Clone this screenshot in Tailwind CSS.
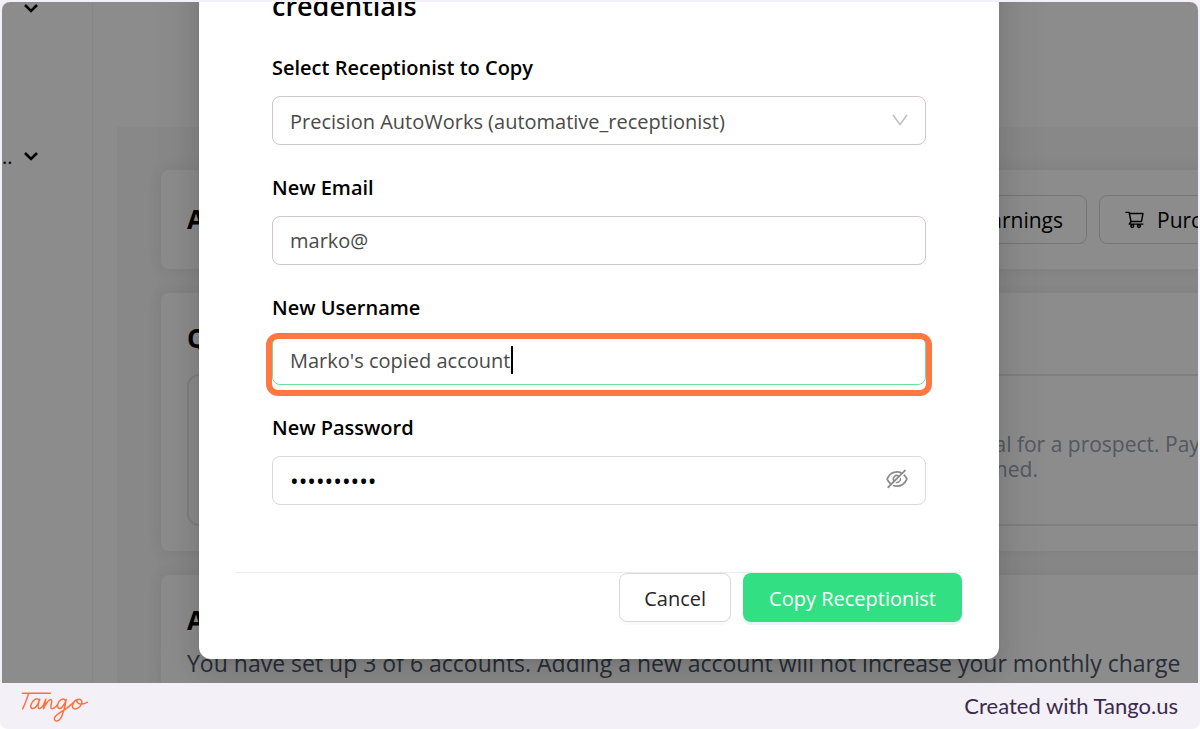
<!DOCTYPE html>
<html lang="en">
<head>
    <meta charset="UTF-8">
    <meta name="viewport" content="width=device-width, initial-scale=1.0">
    <title>Copy Receptionist</title>
    <script src="https://cdn.jsdelivr.net/npm/@tailwindcss/browser@4"></script>
</head>
<body class="bg-white font-['Open_Sans',sans-serif]">

    <div class="flex h-screen flex-col overflow-hidden rounded-b-lg bg-[#f3f1f7] px-[2px] pt-[2px]">

        <!-- Captured screen -->
        <div class="relative flex flex-1 overflow-hidden rounded-t-lg bg-white">

            <!-- Sidebar -->
            <aside class="flex w-[91px] shrink-0 flex-col border-r border-gray-100 text-black">
                <div class="flex h-[14px] items-center pl-[22px]">
                    <svg class="h-[10px] w-[14px]" viewBox="0 0 14 10" fill="none" stroke="currentColor" stroke-width="2.6"><path d="M1 1l6 6 6-6"/></svg>
                </div>
                <div class="mt-[128px] flex h-[26px] items-center">
                    <span class="w-[22px] text-[20px] leading-[26px]">..</span>
                    <svg class="h-[10px] w-[14px]" viewBox="0 0 14 10" fill="none" stroke="currentColor" stroke-width="2.6"><path d="M1 1l6 6 6-6"/></svg>
                </div>
            </aside>

            <!-- Dashboard -->
            <main class="min-w-0 flex-1 pt-[125px] pl-[24px]">
                <div class="flex w-[1400px] flex-col gap-6 bg-[#f7f7f7] py-[43px] pl-[44px]">

                    <section class="flex h-[99px] items-center rounded-lg bg-white pl-[26px] shadow-[0_0_16px_rgba(0,0,0,0.08)]">
                        <h2 class="w-[735px] text-[26px] font-bold text-black">Accounts</h2>
                        <button type="button" class="h-[49px] w-[165px] rounded-lg border border-gray-300 pt-[2px] pr-[23px] text-right text-[21px] text-black">Earnings</button>
                        <button type="button" class="ml-3 flex h-[49px] items-center gap-3 rounded-lg border border-gray-300 px-6 text-[21px] text-black">
                            <svg class="size-[21px]" viewBox="0 0 1024 1024" fill="currentColor"><path d="M922.9 701.9H327.4l29.9-60.9 496.8-.9c16.8 0 31.2-12 34.2-28.6l68.8-385.1c1.8-10.1-.9-20.5-7.5-28.4a34.99 34.99 0 00-26.6-12.5l-632-2.1-5.4-25.4c-3.4-16.2-18-28-34.6-28H96.5a35.3 35.3 0 100 70.6h125.9L246 312.8l58.1 281.3-74.8 122.1a34.96 34.96 0 00-3 36.8c6 11.9 18.1 19.4 31.5 19.4h62.8a102.43 102.43 0 00-20.6 61.7c0 56.6 46 102.6 102.6 102.6s102.6-46 102.6-102.6c0-22.3-7.4-44-20.6-61.7h161.1a102.43 102.43 0 00-20.6 61.7c0 56.6 46 102.6 102.6 102.6s102.6-46 102.6-102.6c0-22.3-7.4-44-20.6-61.7H923c19.4 0 35.3-15.8 35.3-35.3a35.42 35.42 0 00-35.4-35.2zM305.7 253l575.8 1.9-56.4 315.8-452.3.8L305.7 253zm96.9 612.7c-17.4 0-31.6-14.2-31.6-31.6 0-17.4 14.2-31.6 31.6-31.6s31.6 14.2 31.6 31.6a31.6 31.6 0 01-31.6 31.6zm325.1 0c-17.4 0-31.6-14.2-31.6-31.6 0-17.4 14.2-31.6 31.6-31.6s31.6 14.2 31.6 31.6a31.6 31.6 0 01-31.6 31.6z"/></svg>
                            <span class="pt-[2px]">Purchase</span>
                        </button>
                    </section>

                    <section class="h-[258px] rounded-lg bg-white pt-[27px] pl-[26px] shadow-[0_0_16px_rgba(0,0,0,0.08)]">
                        <h2 class="text-[26px] leading-[36px] font-bold text-black">Quick Actions</h2>
                        <div class="mt-[18px] flex h-[152px] items-center rounded-xl border-2 border-gray-200 pl-[767px] text-[21px] leading-[25px] text-gray-400">
                            <p class="pt-[14px]">a trial for a prospect. Pay<br>claimed.</p>
                        </div>
                    </section>

                    <section class="h-[258px] rounded-lg bg-white pt-[27px] pl-[26px] shadow-[0_0_16px_rgba(0,0,0,0.08)]">
                        <h2 class="text-[26px] leading-[36px] font-bold text-black">Accounts</h2>
                        <p class="mt-[7px] text-[23px] leading-[36px] text-gray-600">You have set up 3 of 6 accounts. Adding a new account will not increase your monthly charge</p>
                    </section>
                </div>
            </main>

            <!-- Modal -->
            <div class="absolute inset-0 flex items-end justify-center bg-black/45 pr-[2px] pb-6">
                <form role="dialog" aria-labelledby="dialog-title" class="w-[800px] rounded-xl bg-white p-[37px] pt-[80px] shadow-[0_9px_24px_rgba(0,0,0,0.08),0_5px_9px_-6px_rgba(0,0,0,0.12),0_14px_43px_12px_rgba(0,0,0,0.08)]">
                    <div class="flex flex-col gap-[27px] px-[36px] pb-[67px]">
                        <h1 id="dialog-title" class="text-[27px] leading-[38px] font-semibold text-black">Copy receptionist to new account<br>credentials</h1>

                        <div>
                            <label for="receptionist" class="mb-3 block text-[20px] leading-[32px] font-semibold text-black">Select Receptionist to Copy</label>
                            <div class="relative">
                                <select id="receptionist" class="block h-[49px] w-full appearance-none rounded-lg border border-[#cfc7c9] bg-white px-[17px] pt-[2px] text-[20px] text-[#4a4a48] outline-none">
                                    <option>Precision AutoWorks (automative_receptionist)</option>
                                </select>
                                <svg class="pointer-events-none absolute top-[18px] right-[18px] h-[12px] w-[16px]" viewBox="0 0 16 12" fill="none" stroke="#bfbfbf" stroke-width="1.6"><path d="M1 1l7 9.500 7-9.500"/></svg>
                            </div>
                        </div>

                        <div>
                            <label for="email" class="mb-3 block text-[20px] leading-[32px] font-semibold text-black">New Email</label>
                            <input type="text" id="email" value="marko@" class="block h-[49px] w-full rounded-lg border border-[#cfc7c9] px-[17px] text-[20px] text-[#4a4a48] outline-none">
                        </div>

                        <div>
                            <label for="username" class="mb-3 block text-[20px] leading-[32px] font-semibold text-black">New Username</label>
                            <div class="relative">
                                <input type="text" id="username" value="Marko's copied account" class="block h-[49px] w-full rounded-lg border border-[#6ee09c] px-[17px] text-[20px] text-[#4a4a48] outline-none">
                                <!-- Text caret -->
                                <span class="absolute top-[10px] left-[239px] h-[28px] w-[2px] bg-black"></span>
                                <!-- Highlight of the current step -->
                                <span class="pointer-events-none absolute -inset-x-[6px] -top-[3px] -bottom-[11px] rounded-xl border-6 border-[#ff7742]"></span>
                            </div>
                        </div>

                        <div>
                            <label for="password" class="mb-3 block text-[20px] leading-[32px] font-semibold text-black">New Password</label>
                            <div class="relative">
                                <input type="password" id="password" value="marko12345" class="block h-[49px] w-full rounded-lg border border-[#d9d9d9] px-[17px] text-[23px] text-black outline-none">
                                <button type="button" aria-label="Show password" class="absolute top-[12px] right-[18px] text-[#8c8c8c]">
                                    <svg class="size-[22px]" viewBox="64 64 896 896" fill="currentColor"><path d="M942.2 486.2Q889.47 375.11 816.7 305l-50.88 50.88C807.31 395.53 843.45 447.4 874.7 512 791.5 684.2 673.4 766 512 766q-72.67 0-133.87-22.38L323 798.75Q408 838 512 838q288.3 0 430.2-300.3a60.29 60.29 0 000-51.5zm-63.57-320.64L836 122.88a8 8 0 00-11.32 0L715.31 232.2Q624.86 186 512 186q-288.3 0-430.2 300.3a60.3 60.3 0 000 51.5q56.69 119.4 136.5 191.41L112.48 835a8 8 0 000 11.31L155.17 889a8 8 0 0011.31 0l712.15-712.12a8 8 0 000-11.32zM149.3 512C232.6 339.8 350.7 258 512 258c54.54 0 104.13 9.36 149.12 28.39l-70.3 70.3a176 176 0 00-238.13 238.13l-83.42 83.42C223.1 637.49 183.3 582.28 149.3 512zm246.7 0a112.11 112.11 0 01146.2-106.69L401.31 546.2A112 112 0 01396 512z"/><path d="M508 624c-3.46 0-6.87-.16-10.25-.47l-52.82 52.82a176.09 176.09 0 00227.42-227.42l-52.82 52.82c.31 3.38.47 6.79.47 10.25a111.94 111.94 0 01-112 112z"/></svg>
                                </button>
                            </div>
                        </div>
                    </div>

                    <div class="flex justify-end gap-3 border-t border-[#ebebeb]">
                        <button type="button" class="h-[49px] rounded-lg border border-[#d9d9d9] bg-white px-6 pt-[2px] text-[20px] text-[#262626] shadow-[0_3px_0_rgba(0,0,0,0.02)]">Cancel</button>
                        <button type="submit" class="h-[49px] rounded-lg bg-[#32e083] px-[26px] pt-[2px] text-[20px] text-white shadow-[0_3px_0_rgba(5,145,255,0.1)]">Copy Receptionist</button>
                    </div>
                </form>
            </div>
        </div>

        <!-- Footer -->
        <footer class="flex h-[46px] shrink-0 items-center justify-between px-5 pl-[18px]">
            <svg role="img" aria-label="Tango" class="h-[32px] w-[70px]" viewBox="60 153 210 97" fill="none" stroke="#ff6f3c" stroke-width="4.500" stroke-linecap="round" stroke-linejoin="round">
                <path d="M66 163H151M85 164C80 180 74 196 67 210"/>
                <path d="M117 184C110 174 96 184 92 198C89 211 100 213 108 203C113 197 117 190 119 181C115 192 111 204 115 208C119 212 127 205 131 196L137 181C135 192 132 202 130 210C136 196 147 180 153 182C160 185 149 200 153 208C158 213 167 205 172 198"/>
                <path d="M197 186C190 174 176 184 173 197C171 210 181 213 188 203C194 196 197 190 199 182C195 205 189 228 182 239C176 249 163 250 163 240C163 230 180 222 192 214C203 207 212 200 220 192"/>
                <path d="M233 182C222 184 215 200 219 207C225 215 241 208 246 195C249 184 241 179 234 182C228 186 233 196 244 196C252 196 258 194 263 190"/>
            </svg>
            <span class="font-['Lato',sans-serif] text-[22px] leading-[30px] text-[#3b2a4d]">Created with Tango.us</span>
        </footer>
    </div>

</body>
</html>
